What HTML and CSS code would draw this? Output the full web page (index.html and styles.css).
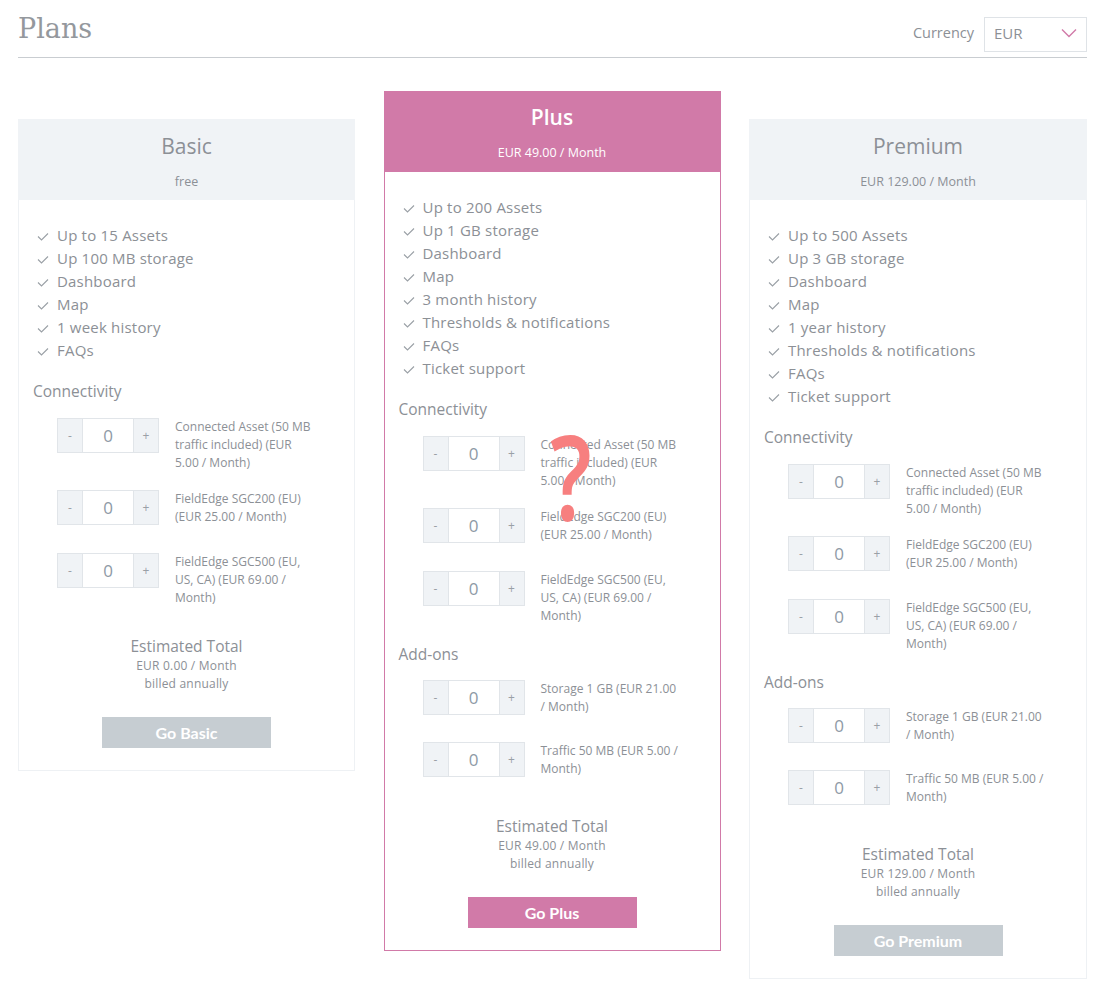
FILE: index.html
```html
<!DOCTYPE html>
<html lang="en">
<head>
<meta charset="utf-8">
<title>Plans</title>
<link rel="stylesheet" href="styles.css">
</head>
<body>
<div class="page">
  <header class="topbar">
    <h1 class="title">Plans</h1>
    <div class="currency">
      <span class="currency-label">Currency</span>
      <div class="select">
        <span>EUR</span>
        <svg class="chev" width="16" height="10" viewBox="0 0 16 10"><path d="M1 1.5 L8 8.5 L15 1.5" fill="none" stroke="#d17aa8" stroke-width="1.4"/></svg>
      </div>
    </div>
  </header>

  <div class="plans">
    <!-- Basic -->
    <section class="card card-side">
      <div class="card-head">
        <div class="plan-name">Basic</div>
        <div class="plan-price">free</div>
      </div>
      <div class="card-body">
        <ul class="features">
          <li><svg class="check" viewBox="0 0 12 9"><path d="M1 4.5 L4.5 8 L11 1.5"/></svg>Up to 15 Assets</li>
          <li><svg class="check" viewBox="0 0 12 9"><path d="M1 4.5 L4.5 8 L11 1.5"/></svg>Up 100 MB storage</li>
          <li><svg class="check" viewBox="0 0 12 9"><path d="M1 4.5 L4.5 8 L11 1.5"/></svg>Dashboard</li>
          <li><svg class="check" viewBox="0 0 12 9"><path d="M1 4.5 L4.5 8 L11 1.5"/></svg>Map</li>
          <li><svg class="check" viewBox="0 0 12 9"><path d="M1 4.5 L4.5 8 L11 1.5"/></svg>1 week history</li>
          <li><svg class="check" viewBox="0 0 12 9"><path d="M1 4.5 L4.5 8 L11 1.5"/></svg>FAQs</li>
        </ul>
        <h3 class="section">Connectivity</h3>
        <div class="row"><div class="stepper"><span class="btn">-</span><span class="val">0</span><span class="btn">+</span></div><div class="label">Connected Asset (50 MB traffic included) (EUR 5.00 / Month)</div></div>
        <div class="row"><div class="stepper"><span class="btn">-</span><span class="val">0</span><span class="btn">+</span></div><div class="label">FieldEdge SGC200 (EU) (EUR 25.00 / Month)</div></div>
        <div class="row"><div class="stepper"><span class="btn">-</span><span class="val">0</span><span class="btn">+</span></div><div class="label">FieldEdge SGC500 (EU, US, CA) (EUR 69.00 / Month)</div></div>
        <div class="total">
          <div class="total-title">Estimated Total</div>
          <div class="total-line">EUR 0.00 / Month</div>
          <div class="total-line">billed annually</div>
        </div>
        <div class="cta"><span class="go go-grey">Go Basic</span></div>
      </div>
    </section>

    <!-- Plus -->
    <section class="card card-plus">
      <div class="card-head head-plus">
        <div class="plan-name">Plus</div>
        <div class="plan-price">EUR 49.00 / Month</div>
      </div>
      <div class="card-body">
        <ul class="features">
          <li><svg class="check" viewBox="0 0 12 9"><path d="M1 4.5 L4.5 8 L11 1.5"/></svg>Up to 200 Assets</li>
          <li><svg class="check" viewBox="0 0 12 9"><path d="M1 4.5 L4.5 8 L11 1.5"/></svg>Up 1 GB storage</li>
          <li><svg class="check" viewBox="0 0 12 9"><path d="M1 4.5 L4.5 8 L11 1.5"/></svg>Dashboard</li>
          <li><svg class="check" viewBox="0 0 12 9"><path d="M1 4.5 L4.5 8 L11 1.5"/></svg>Map</li>
          <li><svg class="check" viewBox="0 0 12 9"><path d="M1 4.5 L4.5 8 L11 1.5"/></svg>3 month history</li>
          <li><svg class="check" viewBox="0 0 12 9"><path d="M1 4.5 L4.5 8 L11 1.5"/></svg>Thresholds &amp; notifications</li>
          <li><svg class="check" viewBox="0 0 12 9"><path d="M1 4.5 L4.5 8 L11 1.5"/></svg>FAQs</li>
          <li><svg class="check" viewBox="0 0 12 9"><path d="M1 4.5 L4.5 8 L11 1.5"/></svg>Ticket support</li>
        </ul>
        <h3 class="section">Connectivity</h3>
        <div class="row"><div class="stepper"><span class="btn">-</span><span class="val">0</span><span class="btn">+</span></div><div class="label">Connected Asset (50 MB traffic included) (EUR 5.00 / Month)</div></div>
        <div class="row"><div class="stepper"><span class="btn">-</span><span class="val">0</span><span class="btn">+</span></div><div class="label">FieldEdge SGC200 (EU) (EUR 25.00 / Month)</div></div>
        <div class="row"><div class="stepper"><span class="btn">-</span><span class="val">0</span><span class="btn">+</span></div><div class="label">FieldEdge SGC500 (EU, US, CA) (EUR 69.00 / Month)</div></div>
        <h3 class="section section-tight">Add-ons</h3>
        <div class="row row-addon"><div class="stepper"><span class="btn">-</span><span class="val">0</span><span class="btn">+</span></div><div class="label">Storage 1 GB (EUR 21.00 / Month)</div></div>
        <div class="row row-addon"><div class="stepper"><span class="btn">-</span><span class="val">0</span><span class="btn">+</span></div><div class="label">Traffic 50 MB (EUR 5.00 / Month)</div></div>
        <div class="total">
          <div class="total-title">Estimated Total</div>
          <div class="total-line">EUR 49.00 / Month</div>
          <div class="total-line">billed annually</div>
        </div>
        <div class="cta"><span class="go go-pink">Go Plus</span></div>
      </div>
      <div class="qmark">?</div>
    </section>

    <!-- Premium -->
    <section class="card card-side">
      <div class="card-head">
        <div class="plan-name">Premium</div>
        <div class="plan-price">EUR 129.00 / Month</div>
      </div>
      <div class="card-body">
        <ul class="features">
          <li><svg class="check" viewBox="0 0 12 9"><path d="M1 4.5 L4.5 8 L11 1.5"/></svg>Up to 500 Assets</li>
          <li><svg class="check" viewBox="0 0 12 9"><path d="M1 4.5 L4.5 8 L11 1.5"/></svg>Up 3 GB storage</li>
          <li><svg class="check" viewBox="0 0 12 9"><path d="M1 4.5 L4.5 8 L11 1.5"/></svg>Dashboard</li>
          <li><svg class="check" viewBox="0 0 12 9"><path d="M1 4.5 L4.5 8 L11 1.5"/></svg>Map</li>
          <li><svg class="check" viewBox="0 0 12 9"><path d="M1 4.5 L4.5 8 L11 1.5"/></svg>1 year history</li>
          <li><svg class="check" viewBox="0 0 12 9"><path d="M1 4.5 L4.5 8 L11 1.5"/></svg>Thresholds &amp; notifications</li>
          <li><svg class="check" viewBox="0 0 12 9"><path d="M1 4.5 L4.5 8 L11 1.5"/></svg>FAQs</li>
          <li><svg class="check" viewBox="0 0 12 9"><path d="M1 4.5 L4.5 8 L11 1.5"/></svg>Ticket support</li>
        </ul>
        <h3 class="section">Connectivity</h3>
        <div class="row"><div class="stepper"><span class="btn">-</span><span class="val">0</span><span class="btn">+</span></div><div class="label">Connected Asset (50 MB traffic included) (EUR 5.00 / Month)</div></div>
        <div class="row"><div class="stepper"><span class="btn">-</span><span class="val">0</span><span class="btn">+</span></div><div class="label">FieldEdge SGC200 (EU) (EUR 25.00 / Month)</div></div>
        <div class="row"><div class="stepper"><span class="btn">-</span><span class="val">0</span><span class="btn">+</span></div><div class="label">FieldEdge SGC500 (EU, US, CA) (EUR 69.00 / Month)</div></div>
        <h3 class="section section-tight">Add-ons</h3>
        <div class="row row-addon"><div class="stepper"><span class="btn">-</span><span class="val">0</span><span class="btn">+</span></div><div class="label">Storage 1 GB (EUR 21.00 / Month)</div></div>
        <div class="row row-addon"><div class="stepper"><span class="btn">-</span><span class="val">0</span><span class="btn">+</span></div><div class="label">Traffic 50 MB (EUR 5.00 / Month)</div></div>
        <div class="total">
          <div class="total-title">Estimated Total</div>
          <div class="total-line">EUR 129.00 / Month</div>
          <div class="total-line">billed annually</div>
        </div>
        <div class="cta"><span class="go go-grey">Go Premium</span></div>
      </div>
    </section>
  </div>
</div>
</body>
</html>
```

FILE: styles.css
```css
* { box-sizing: border-box; }

html, body {
  margin: 0;
  padding: 0;
  background: #ffffff;
}

body {
  font-family: "Open Sans", "Noto Sans", sans-serif;
  color: #8c9096;
}

.page {
  width: 1069px;
  margin-left: 18px;
  padding-bottom: 24px;
}

/* ---------- top bar ---------- */
.topbar {
  display: flex;
  justify-content: space-between;
  align-items: flex-start;
  height: 58px;
  border-bottom: 1px solid #c9cdd1;
}

.title {
  margin: 11px 0 0 0;
  font-family: "DejaVu Serif", "Liberation Serif", serif;
  font-weight: normal;
  font-size: 27px;
  line-height: 36px;
  color: #94989d;
}

.currency {
  display: flex;
  align-items: center;
  gap: 10px;
  margin-top: 17px;
}

.currency-label {
  font-size: 14.5px;
  line-height: 20px;
  margin-top: -3px;
  color: #8c9096;
}

.select {
  width: 103px;
  height: 35px;
  border: 1px solid #dfe3e7;
  display: flex;
  align-items: center;
  justify-content: space-between;
  padding: 0 9px 3px 9px;
  font-size: 15px;
  color: #8c9096;
}

.chev { display: block; }

/* ---------- cards ---------- */
.plans {
  display: grid;
  grid-template-columns: 337px 337px 338px;
  justify-content: space-between;
  align-items: start;
  margin-top: 33px;
}

.card {
  position: relative;
  border: 1px solid #eef1f4;
  background: #fff;
}

.card-side { margin-top: 28px; }

.card-plus { border-color: #d17aa8; }

.card-head {
  height: 81px;
  margin: -1px -1px 0 -1px;
  background: #f0f3f6;
  text-align: center;
  padding-top: 14px;
}

.head-plus {
  background: #d17aa8;
  color: #ffffff;
}

.plan-name {
  font-size: 21px;
  line-height: 26px;
  color: #8c9096;
}

.head-plus .plan-name {
  color: #fff;
  font-weight: 600;
  margin-top: -1px;
}

.plan-price {
  margin-top: 14px;
  font-size: 12.5px;
  line-height: 18px;
  color: #8c9096;
}

.head-plus .plan-price { color: #fff; }

.card-body {
  padding: 24px 14px 22px 14px;
}

.features {
  list-style: none;
  margin: 0 0 17px 0;
  padding: 0 0 0 4px;
}

.features li {
  display: flex;
  align-items: center;
  font-size: 15px;
  letter-spacing: 0.2px;
  line-height: 23px;
  color: #8c9096;
}

.check {
  width: 12px;
  height: 9px;
  margin-right: 8px;
  margin-top: 2px;
  fill: none;
  stroke: #9aa0a6;
  stroke-width: 1.1;
}

.section {
  margin: 0 0 15px 0;
  font-size: 15.5px;
  font-weight: normal;
  line-height: 24px;
  color: #8c9096;
}

.section-tight { margin-top: -1px; margin-bottom: 14px; }

.row {
  display: flex;
  align-items: flex-start;
  margin: 0 0 18px 24px;
}

.row-addon { margin-bottom: 17px; }

.stepper {
  display: flex;
  height: 35px;
  margin-bottom: 10px;
  flex: none;
}

.stepper .btn {
  width: 26px;
  background: #f0f3f6;
  border: 1px solid #e1e5e9;
  display: flex;
  align-items: center;
  justify-content: center;
  font-size: 12px;
  color: #9aa0a6;
}

.stepper .val {
  width: 50px;
  border-top: 1px solid #e1e5e9;
  border-bottom: 1px solid #e1e5e9;
  display: flex;
  align-items: center;
  justify-content: center;
  font-size: 17px;
  color: #8e9aa6;
}

.label {
  margin-left: 16px;
  width: 140px;
  font-size: 12px;
  line-height: 18px;
  color: #8c9096;
}

.total {
  text-align: center;
  margin-top: 28px;
}

.total-title {
  font-size: 15.5px;
  line-height: 22px;
  color: #8c9096;
}

.total-line {
  font-size: 12px;
  letter-spacing: 0.2px;
  line-height: 18px;
  color: #8c9096;
}

.cta {
  display: flex;
  justify-content: center;
  margin-top: 24px;
}

.go {
  width: 169px;
  height: 31px;
  display: flex;
  align-items: center;
  justify-content: center;
  font-family: "Lato", "Open Sans", sans-serif;
  font-weight: bold;
  font-size: 16px;
  color: #ffffff;
}

.go-grey { background: #c6cdd2; }
.go-pink { background: #d17aa8; }

.qmark {
  position: absolute;
  left: 159px;
  top: 318px;
  font-family: "Open Sans", sans-serif;
  font-weight: 600;
  font-size: 118px;
  line-height: 130px;
  color: #f77f7f;
  transform: scaleX(0.78);
  pointer-events: none;
}
```
